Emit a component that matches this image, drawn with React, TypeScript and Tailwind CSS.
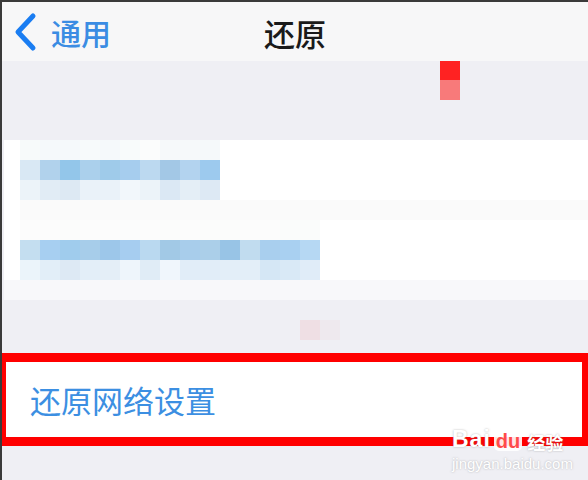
import React from "react";

const rowOne = {
  top: ["bg-[#f7fafa]", "bg-[#f5f9fb]", "bg-[#f5f9fb]", "bg-[#f7fafb]", "bg-[#f5f9fb]", "bg-[#f8fbfb]", "bg-[#fbfcfc]", "bg-[#f6f9fa]", "bg-[#f6f9fa]", "bg-[#f5f9fa]"],
  mid: ["bg-[#d9e8f4]", "bg-[#b1d2ec]", "bg-[#93c6ea]", "bg-[#abd0ec]", "bg-[#9fcbea]", "bg-[#a6cdee]", "bg-[#bcd9f0]", "bg-[#a3c8e6]", "bg-[#b3d3ef]", "bg-[#9dcaee]"],
  bottom: ["bg-[#ecf3f9]", "bg-[#e1ecf5]", "bg-[#dde9f3]", "bg-[#eaf2f9]", "bg-[#eaf2f9]", "bg-[#f2f7fb]", "bg-[#ecf3f9]", "bg-[#dbe8f4]", "bg-[#e4eef6]", "bg-[#dde9f4]"],
};

const rowTwo = {
  top: ["bg-[#fcfcfc]", "bg-[#fcfcfc]", "bg-[#fbfcfb]", "bg-[#fcfcfc]", "bg-[#fcfcfc]", "bg-[#fbfcfc]", "bg-[#fcfcfc]", "bg-[#fbfcfb]", "bg-[#fcfcfc]", "bg-[#fbfcfb]", "bg-[#fbfcfb]", "bg-[#fcfcfc]", "bg-[#fcfcfc]", "bg-[#fafcfb]", "bg-[#fafcfb]"],
  mid: ["bg-[#c4def0]", "bg-[#a7cff1]", "bg-[#a0cced]", "bg-[#a7cdea]", "bg-[#9dc7ea]", "bg-[#a6cdf0]", "bg-[#bad9f0]", "bg-[#a2c9e6]", "bg-[#a8cdeb]", "bg-[#abcfe9]", "bg-[#98c4e6]", "bg-[#c1dcef]", "bg-[#a9cfee]", "bg-[#a9d0f1]", "bg-[#b6d8f3]"],
  bottom: ["bg-[#ebf4fa]", "bg-[#e2eef8]", "bg-[#dde9f4]", "bg-[#e3eef8]", "bg-[#e4eef7]", "bg-[#eef5fb]", "bg-[#e0ecf6]", "bg-[#f0f6fc]", "bg-[#e1edf8]", "bg-[#e1edf8]", "bg-[#e3eef8]", "bg-[#e3eef8]", "bg-[#d5e7f5]", "bg-[#d9e9f6]", "bg-[#e0ecf8]"],
};

function Mosaic({ rows }: { rows: { top: string[]; mid: string[]; bottom: string[] } }) {
  return (
    <div className="flex flex-col pl-4">
      {[rows.top, rows.mid, rows.bottom].map((line, i) => (
        <div key={i} className="flex">
          {line.map((c, j) => (
            <div key={j} className={`h-5 w-5 ${c}`} />
          ))}
        </div>
      ))}
    </div>
  );
}

export default function App() {
  return (
    <div
      className="relative w-[588px] h-[480px] overflow-hidden bg-[#efeff4] border-t-2 border-l-2 border-[#3a3a3a]"
      style={{ fontFamily: '"Noto Sans CJK SC", "Noto Sans", sans-serif' }}
    >
      {/* Nav bar */}
      <div className="grid grid-cols-[1fr_auto_1fr] items-center h-[59px] bg-[#f7f7f8]">
        <div className="flex items-center pl-[10px]">
          <svg width="26" height="40" viewBox="0 0 26 40" className="text-[#1a7df2]">
            <path d="M21 4 L6 20 L21 36" fill="none" stroke="currentColor" strokeWidth="5" strokeLinecap="round" strokeLinejoin="round" />
          </svg>
          <span className="ml-[13px] text-[30px] leading-none font-medium text-[#3b8ce3]">通用</span>
        </div>
        <span className="text-[31px] leading-none font-medium text-[#1a1a1a] pt-[2px]">还原</span>
        <div />
      </div>

      {/* Grey header area */}
      <div className="h-[79px] pl-[438px]">
        <div className="h-[19px] w-5 bg-[#ff2222]" />
        <div className="h-5 w-5 bg-[#f87a7a]" />
      </div>

      {/* White list */}
      <div className="ml-[2px] bg-white">
        <Mosaic rows={rowOne} />
        <div className="ml-4 h-5 bg-[#fafafa]" />
        <Mosaic rows={rowTwo} />
        <div className="h-5 bg-[#f8f8fa]" />
      </div>

      {/* Grey gap */}
      <div className="h-[53px] pt-5 pl-[298px] flex">
        <div className="h-5 w-5 bg-[#efdfe4]" />
        <div className="h-5 w-5 bg-[#eee9ee]" />
      </div>

      {/* Highlighted row */}
      <div className="h-[93px] -ml-[2px] border-y-[9px] border-x-[6px] border-[#ff0000] bg-white flex items-center pl-6">
        <span className="text-[31px] leading-none text-[#3c8fe2]">还原网络设置</span>
      </div>

      {/* Watermark */}
      <div className="absolute left-[450px] top-[426px] flex flex-col items-start text-white [text-shadow:0_0_2px_rgba(110,110,110,0.5)]">
        <div className="flex items-end gap-[3px] leading-none">
          <span className="text-[23px] font-bold tracking-[1px]" style={{ fontFamily: '"Liberation Sans", sans-serif' }}>Bai</span>
          <span className="rounded-[5px] bg-white/90 px-[2px] text-[20px] font-bold text-[#ff4a4a] [text-shadow:none]" style={{ fontFamily: '"Liberation Sans", sans-serif' }}>du</span>
          <span className="ml-[2px] text-[18px] font-bold">经验</span>
        </div>
        <span className="mt-[5px] text-[15px] leading-none" style={{ fontFamily: '"Liberation Sans", sans-serif' }}>jingyan.baidu.com</span>
      </div>
    </div>
  );
}
